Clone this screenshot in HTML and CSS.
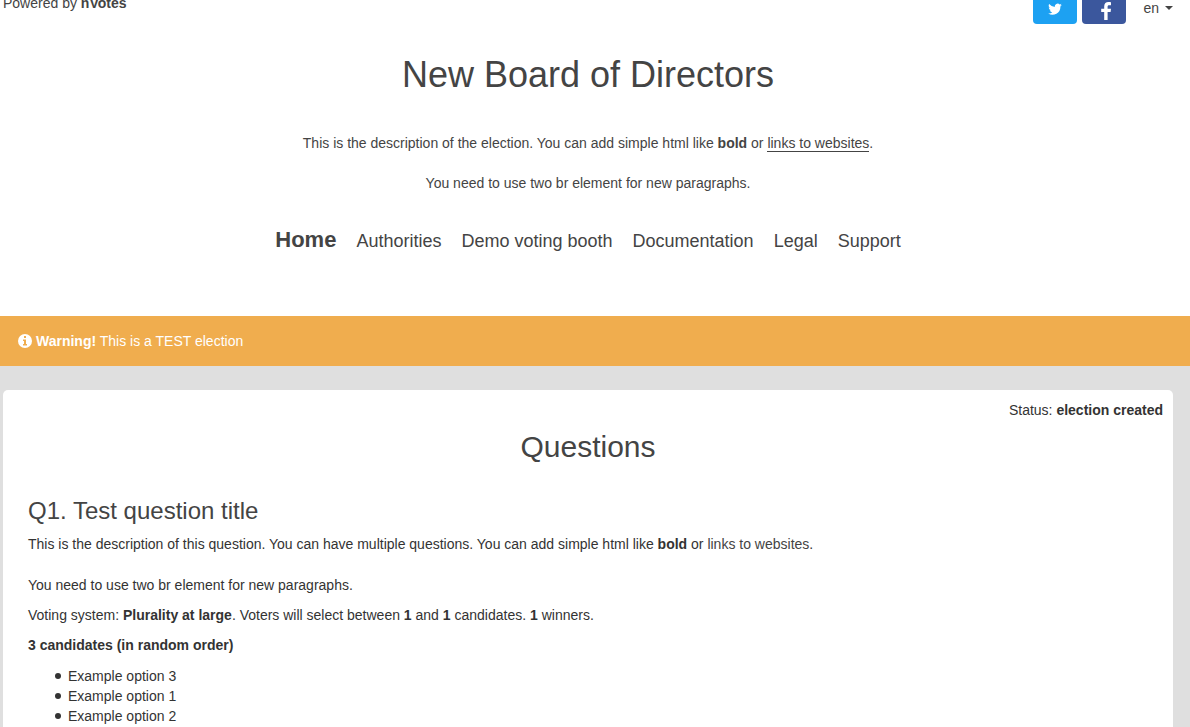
FILE: index.html
```html
<!DOCTYPE html>
<html lang="en">
<head>
<meta charset="utf-8">
<title>New Board of Directors</title>
<link rel="stylesheet" href="styles.css">
</head>
<body>
<header class="header">
  <div class="topbar">
    <div>Powered by <a class="brand" href="#nvotes">nVotes</a></div>
    <div class="actions">
      <a class="social twitter" href="#twitter" aria-label="Twitter">
        <svg width="14" height="14" viewBox="0 0 24 24"><path fill="#fff" d="M23.600 5a9.700 9.700 0 0 1-2.700.8 4.800 4.800 0 0 0 2.100-2.700 9.500 9.500 0 0 1-3 1.200 4.800 4.800 0 0 0-8.200 4.300A13.600 13.600 0 0 1 2 3.600a4.800 4.800 0 0 0 1.500 6.400 4.700 4.700 0 0 1-2.200-.6 4.800 4.800 0 0 0 3.800 4.700 4.800 4.800 0 0 1-2.100.1 4.800 4.800 0 0 0 4.400 3.300A9.600 9.600 0 0 1 .3 19.500 13.500 13.500 0 0 0 21.200 7.500 9.600 9.600 0 0 0 23.600 5z"/></svg>
      </a>
      <a class="social facebook" href="#facebook" aria-label="Facebook">
        <svg width="12" height="18" viewBox="0 0 12 18"><path fill="#fff" d="M11 .2v3H9.200C7.900 3.200 7.600 3.800 7.600 4.700v2H11l-.4 3.200h-3V18H4.200V9.900H1.200V6.700h3V4.200C4.200 1.500 5.900 0 8.400 0c1.200 0 2.200.1 2.600.2z"/></svg>
      </a>
      <button class="language" type="button">en <span class="caret"></span></button>
    </div>
  </div>
  <h1 class="title">New Board of Directors</h1>
  <p class="description">This is the description of the election. You can add simple html like <b>bold</b> or <a class="text-link" href="#websites">links to websites</a>.<br><br>You need to use two br element for new paragraphs.</p>
  <nav class="nav">
    <a class="nav-link active" href="#home">Home</a>
    <a class="nav-link" href="#authorities">Authorities</a>
    <a class="nav-link" href="#demo">Demo voting booth</a>
    <a class="nav-link" href="#documentation">Documentation</a>
    <a class="nav-link" href="#legal">Legal</a>
    <a class="nav-link" href="#support">Support</a>
  </nav>
</header>
<div class="warning" role="alert">
  <svg class="info" width="14" height="14" viewBox="0 0 14 14"><circle cx="7" cy="7" r="7" fill="#fff"/><path fill="#f0ad4e" d="M6 2h2v2H6zM5 5.500h3V10h1v1.500H5V10h1V7H5z"/></svg>
  <div><b>Warning!</b> This is a TEST election</div>
</div>
<main class="main">
  <section class="panel">
    <div class="status">Status: <b>election created</b></div>
    <h2 class="heading">Questions</h2>
    <h3 class="question">Q1. Test question title</h3>
    <p class="text lead">This is the description of this question. You can have multiple questions. You can add simple html like <b>bold</b> or <a class="plain-link" href="#websites">links to websites</a>.</p>
    <p class="text">You need to use two br element for new paragraphs.</p>
    <p class="text">Voting system: <b>Plurality at large</b>. Voters will select between <b>1</b> and <b>1</b> candidates. <b>1</b> winners.</p>
    <p class="text"><b>3 candidates (in random order)</b></p>
    <ul class="options">
      <li class="option">Example option 3</li>
      <li class="option">Example option 1</li>
      <li class="option">Example option 2</li>
    </ul>
  </section>
</main>
</body>
</html>
```
FILE: styles.css
```css
* {
  box-sizing: border-box;
}

body {
  margin: 0;
  background: #dfdfdf;
  color: #333;
  font-family: "Liberation Sans", Arial, sans-serif;
  font-size: 14px;
  line-height: 20px;
}

.header {
  margin-top: -10px;
  padding: 0 17px 61px 3px;
  background: #fff;
  color: #444;
}

.topbar {
  display: flex;
  justify-content: space-between;
  height: 34px;
  padding-top: 3px;
}

.brand {
  color: #444;
  font-weight: bold;
  text-decoration: none;
}

.actions {
  display: flex;
  gap: 5px;
  margin-top: -3px;
}

.social {
  display: flex;
  align-items: center;
  justify-content: center;
  width: 44px;
  height: 34px;
  padding-top: 4px;
  border-radius: 4px;
}

.twitter {
  background: #1da1f2;
}

.facebook {
  padding: 8px 0 0 4px;
  background: #3b579d;
}

.language {
  display: flex;
  align-items: center;
  gap: 6px;
  height: 34px;
  margin-left: 12px;
  padding: 2px 0 0;
  border: 0;
  background: none;
  color: #444;
  font: inherit;
}

.caret {
  border: 4px solid transparent;
  border-top-color: #444;
  border-bottom: 0;
}

.title {
  margin: 31px 0 38px;
  font-size: 36px;
  font-weight: normal;
  line-height: 40px;
  text-align: center;
}

.description {
  margin: 0;
  text-align: center;
}

.text-link {
  border-bottom: 1px solid #444;
  color: #444;
  text-decoration: none;
}

.nav {
  display: flex;
  flex-wrap: wrap;
  align-items: baseline;
  justify-content: center;
  column-gap: 20px;
  margin-top: 33px;
}

.nav-link {
  color: #444;
  font-size: 18px;
  line-height: 27px;
  text-decoration: none;
}

.active {
  font-size: 22px;
  font-weight: bold;
}

.warning {
  display: flex;
  align-items: center;
  gap: 4px;
  padding: 15px 18px;
  background: #f0ad4e;
  color: #fff;
}

.main {
  padding: 24px 17px 24px 3px;
}

.panel {
  padding: 10px 25px 40px;
  border-radius: 5px;
  background: #fff;
}

.status {
  margin-right: -15px;
  text-align: right;
}

.heading {
  margin: 10px 0 34px;
  color: #444;
  font-size: 30px;
  font-weight: normal;
  line-height: 34px;
  text-align: center;
}

.question {
  margin: 0 0 10px;
  color: #444;
  font-size: 24px;
  font-weight: normal;
  line-height: 26px;
}

.text {
  margin: 0 0 10px;
}

.lead {
  margin-bottom: 21px;
}

.plain-link {
  color: #444;
  text-decoration: none;
}

.options {
  margin: 11px 0 0;
  padding-left: 27px;
  list-style: none;
}

.option {
  display: flex;
  align-items: center;
  gap: 7px;
}

.option::before {
  content: "";
  width: 6px;
  height: 6px;
  border-radius: 50%;
  background: #333;
}
```
